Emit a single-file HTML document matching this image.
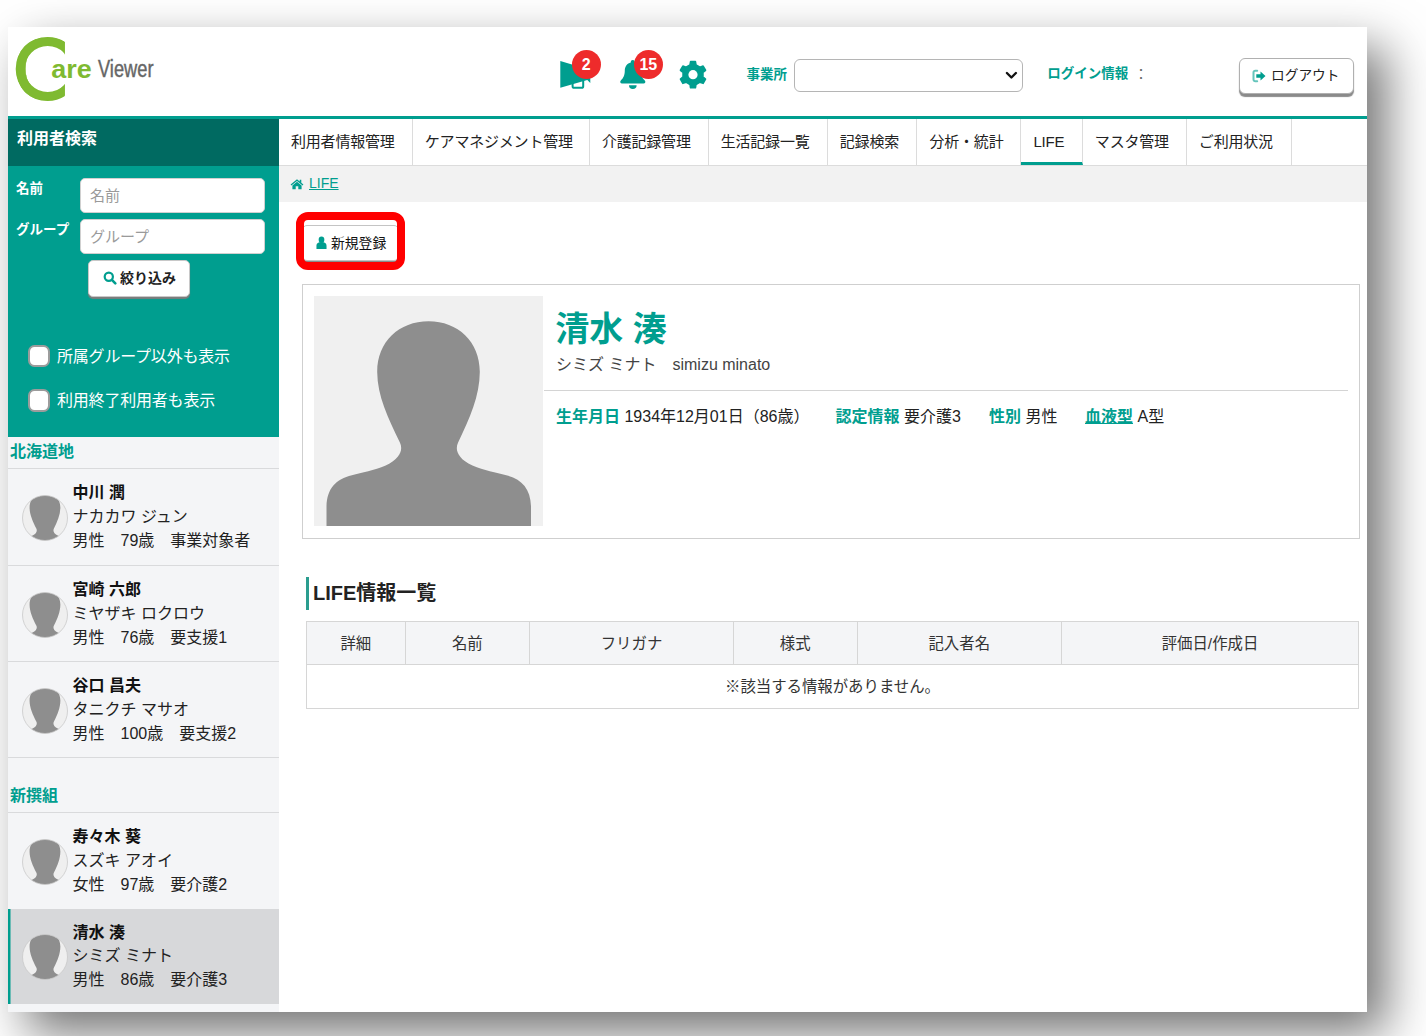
<!DOCTYPE html>
<html lang="ja">
<head>
<meta charset="utf-8">
<title>Care Viewer - LIFE</title>
<style>
*{box-sizing:border-box;margin:0;padding:0}
html,body{width:1426px;height:1036px;overflow:hidden;background:#fff}
body{font-family:"Liberation Sans","Noto Sans CJK JP",sans-serif;color:#222;position:relative}
#frame{position:absolute;left:8px;top:27px;width:1359px;height:985px;background:#fff;box-shadow:19px 21px 46px rgba(0,0,0,.55);overflow:hidden}
.abs{position:absolute}
/* header */
#hdr{position:absolute;left:0;top:0;width:1359px;height:89px;background:#fff}
#hline{position:absolute;left:0;top:89px;width:1359px;height:3px;background:#009e8f}
.teal{color:#009e8f}
.hlabel{position:absolute;font-weight:bold;font-size:13.5px;color:#009e8f;white-space:nowrap;line-height:20px}
#sel{position:absolute;left:786px;top:32px;width:229px;height:33px;border:1px solid #b5b5b5;border-radius:6px;background:#fff}
#logout{position:absolute;left:1231px;top:31px;width:115px;height:35.5px;border:1px solid #b0b0b0;border-radius:6px;background:#fff;box-shadow:0 3px 1px #8a8a8a;font-size:13.7px;line-height:33px;white-space:nowrap}
.badge{position:absolute;width:29px;height:29px;border-radius:50%;background:#ee2b2b;color:#fff;font-weight:bold;font-size:16px;line-height:29.8px;text-align:center}
/* sidebar */
#side{position:absolute;left:0;top:92px;width:271px;height:893px;background:#f4f5f7}
#sidehd{position:absolute;left:0;top:0;width:271px;height:47px;background:#006a61;color:#fff;font-weight:bold;font-size:16px;line-height:40px;padding-left:9px}
#search{position:absolute;left:0;top:47px;width:271px;height:271px;background:#009e8f;color:#fff}
.slabel{position:absolute;left:8px;font-weight:bold;font-size:13.5px;line-height:20px;white-space:nowrap}
.sinput{position:absolute;left:72px;width:185px;height:35px;background:#fff;border-radius:5px;border:1px solid #d0d0d0;color:#9a9a9a;font-size:15px;line-height:33px;padding-left:9px}
#filter{position:absolute;left:80px;width:102px;height:37px;background:#fff;border-radius:5px;border:1px solid #c8c8c8;box-shadow:0 2px 1px #7d7d7d;color:#222;font-weight:bold;font-size:14px;line-height:34px;white-space:nowrap}
.cb{position:absolute;left:19.5px;width:22.5px;height:22.5px;background:#fff;border:2px solid #9c9c9c;border-radius:6.5px}
.cbl{position:absolute;left:49px;letter-spacing:-.2px;font-size:16px;line-height:24px;white-space:nowrap;color:#fff}
.ghead{position:absolute;left:0;width:271px;border-bottom:1px solid #d9dadc;color:#009e8f;font-weight:bold;font-size:16px;padding-left:2px;white-space:nowrap}
.item{position:absolute;left:0;width:271px;height:97px;border-bottom:1px solid #d9dadc}
.item.sel{background:linear-gradient(90deg,#009e8f 2px,#d7d8da 3px);border-bottom:none}
.item .av{position:absolute;left:14px;top:25.5px;width:46px;height:46px}
.item .t{position:absolute;left:64.5px;top:11.4px;font-size:16px;line-height:24.3px;white-space:nowrap;color:#222}
.item .t b{font-size:16px;color:#111;position:relative;top:.8px}
/* nav */
#nav{position:absolute;left:271px;top:92px;width:1088px;height:47px;background:#fff;border-bottom:1px solid #dcdcdc;display:flex}
#nav div{height:46px;padding:0 0 0 12px;text-align:left;letter-spacing:-.2px;flex:none;border-right:1px solid #dcdcdc;font-size:15px;line-height:46px;white-space:nowrap;color:#222}
#nav div.on{border-bottom:3px solid #009e8f;height:46px}
#crumb{position:absolute;left:271px;top:139px;width:1088px;height:36px;background:#f2f2f2}
/* content */
#hl{position:absolute;left:288px;top:185px;width:109px;height:58px;border:8px solid #ff0000;border-radius:12px}
#newbtn{position:absolute;left:294px;top:198px;width:97px;height:35.5px;border:1px solid #c4c4c4;border-radius:5px;background:#fff;box-shadow:0 2px 1px #8a8a8a;font-size:13.8px;line-height:34px;white-space:nowrap;color:#111}
#card{position:absolute;left:294px;top:257px;width:1058px;height:255px;border:1px solid #cfcfcf;background:#fff}
#photo{position:absolute;left:11px;top:11px;width:229px;height:230px;background:#f0f0f0}
#uname{position:absolute;left:252.3px;top:24px;font-size:34px;font-weight:bold;color:#009e8f;line-height:40px;white-space:nowrap}
#ukana{position:absolute;left:253px;top:68.5px;font-size:16px;color:#444;line-height:22px;white-space:pre}
#udiv{position:absolute;left:241px;top:105px;width:804px;height:1px;background:#d4d4d4}
#uinfo{position:absolute;left:253px;top:121px;font-size:16px;line-height:22px;white-space:nowrap;color:#222}
#uinfo b{color:#009e8f}
#uinfo span{position:absolute;top:0}
#sect{position:absolute;left:298px;top:550px;height:33px;border-left:3px solid #2a9d8f;padding-left:4px;font-size:20px;font-weight:bold;line-height:33px;color:#222;white-space:nowrap}
#tbl{position:absolute;left:298px;top:594px;width:1053px;height:87.6px;border:1px solid #d6d6d6}
#tbl .th{position:absolute;top:0;height:43px;background:#f4f5f7;border-right:1px solid #d6d6d6;border-bottom:1px solid #d6d6d6;font-size:15.4px;line-height:43.6px;text-align:center;color:#333}
#tbl .td{position:absolute;left:0;top:43px;width:1051px;height:42px;font-size:15.4px;line-height:43.4px;text-align:center;color:#333}
</style>
</head>
<body>
<svg width="0" height="0" style="position:absolute"><defs>
<clipPath id="avc"><circle cx="23" cy="23" r="22.500"/></clipPath>
</defs></svg>
<div id="frame">
<div id="hdr">
<svg class="abs" style="left:0;top:0" width="200" height="89" viewBox="0 0 200 89">
<defs><clipPath id="cclip"><rect x="0" y="0" width="56.8" height="89"/></clipPath></defs>
<circle cx="39.7" cy="42" r="27.5" fill="none" stroke="#7fba31" stroke-width="9" clip-path="url(#cclip)"/>
<g clip-path="url(#cclip)"><text transform="translate(8.6,0) scale(1.04,1)" x="-4.22" y="71.95" font-family="'Liberation Sans',sans-serif" font-size="87" fill="#7fba31" stroke="#7fba31" stroke-width="0.4">C</text></g><text x="43.3" y="50.8" font-family="'Liberation Sans',sans-serif" font-weight="bold" font-size="26.6" fill="#7fba31" textLength="40.5" lengthAdjust="spacingAndGlyphs">are</text>
<text x="90" y="50.2" font-family="'Liberation Sans',sans-serif" font-size="24.6" fill="#666" stroke="#666" stroke-width=".45" textLength="55.5" lengthAdjust="spacingAndGlyphs">Viewer</text>
</svg>
<svg class="abs" style="left:540px;top:20px" width="180" height="60" viewBox="540 20 180 60">
<rect x="564.6" y="51" width="10.6" height="9.8" rx="1.6" fill="#fff" stroke="#009e8f" stroke-width="2"/>
<path d="M552.3 34 L582.3 43 L582.3 56 L579.3 52.9 L552.3 60.7Z" fill="#009e8f"/>
<path d="M624.8 33c1.2 0 2 .9 2 2v.6c3.6.9 6 4 6 8 0 5 1.500 7.600 4 10 1.200 1.200.4 3-1.200 3h-21.600c-1.600 0-2.400-1.800-1.200-3 2.500-2.400 4-5 4-10 0-4 2.400-7.100 6-8v-.6c0-1.100.8-2 2-2z" fill="#009e8f"/>
<path d="M621 58.200h7.600a3.800 3.800 0 0 1-7.600 0z" fill="#009e8f"/>
<g transform="translate(685,47.700)"><path d="M-2.98 -9.75 L-2.42 -13.08 L2.42 -13.08 L2.98 -9.75 L6.96 -7.46 L10.11 -8.64 L12.54 -4.44 L9.94 -2.29 L9.94 2.29 L12.54 4.44 L10.11 8.64 L6.96 7.46 L2.98 9.75 L2.42 13.08 L-2.42 13.08 L-2.98 9.75 L-6.96 7.46 L-10.11 8.64 L-12.54 4.44 L-9.94 2.29 L-9.94 -2.29 L-12.54 -4.44 L-10.11 -8.64 L-6.96 -7.46Z" fill="#009e8f" stroke="#009e8f" stroke-width="1.6" stroke-linejoin="round"/><circle r="4.600" fill="#fff"/></g>
</svg>
<div class="badge" style="left:563.8px;top:22.8px">2</div>
<div class="badge" style="left:625.8px;top:22.8px">15</div>
<div class="hlabel" style="left:738.4px;top:37.8px">事業所</div>
<div id="sel"><svg class="abs" style="left:208px;top:9px" width="16" height="14" viewBox="0 0 16 14"><path d="M3.9 4 L8.4 8.5 L12.9 4" fill="none" stroke="#111" stroke-width="2.4" stroke-linecap="round" stroke-linejoin="round"/></svg></div>
<div class="hlabel" style="left:1039.2px;top:37px">ログイン情報</div>
<div class="abs" style="left:1126px;top:37px;font-size:14px;line-height:20px;color:#666">：</div>
<div id="logout"><svg class="abs" style="left:12.2px;top:10px" width="14" height="14" viewBox="0 0 14 14"><path d="M5.200 1.800 H3.200 a1.700 1.700 0 0 0 -1.700 1.700 v7 a1.700 1.700 0 0 0 1.700 1.700 H5.200" fill="none" stroke="#009e8f" stroke-opacity=".6" stroke-width="2" stroke-linecap="round"/><path d="M4.300 5.300 h4.200 v-2.800 l5 4.500 l-5 4.500 v-2.800 h-4.200z" fill="#009e8f"/></svg><span class="abs" style="left:31px;top:0">ログアウト</span></div>
</div>
<div id="hline"></div>
<div id="side">
<div id="sidehd">利用者検索</div>
<div id="search">
<div class="slabel" style="top:12.700px">名前</div>
<div class="sinput" style="top:12px">名前</div>
<div class="slabel" style="top:53.600px">グループ</div>
<div class="sinput" style="top:53px">グループ</div>
<div id="filter" style="top:94px"><svg class="abs" style="left:14px;top:10px" width="14" height="14" viewBox="0 0 14 14"><circle cx="5.800" cy="5.800" r="4.100" fill="none" stroke="#009e8f" stroke-width="2.200"/><path d="M8.900 8.900 L12.300 12.300" stroke="#009e8f" stroke-width="2.600" stroke-linecap="round"/></svg><span class="abs" style="left:31px;top:0">絞り込み</span></div>
<div class="cb" style="top:178.5px"></div><div class="cbl" style="top:178.6px">所属グループ以外も表示</div>
<div class="cb" style="top:223.4px"></div><div class="cbl" style="top:223.4px">利用終了利用者も表示</div>
</div>
<div class="ghead" style="top:318px;height:32px;line-height:30.6px">北海道地</div>
<div class="item" style="top:350px;height:97px"><svg class="av" viewBox="0 0 46 46"><circle cx="23" cy="23" r="22.500" fill="#efefef"/><g clip-path="url(#avc)"><g transform="translate(23,36) scale(0.3) translate(-114.600,-153.700)"><path d="M114.6 25.3C85 25.3 63 46 63.2 76C63.4 100 74 122 86 146.5C89 153 87 162 71.7 169.4C60 174.5 48 176.5 37.900 179C22 183 13 192 12.500 210L12.500 229.700L217 229.700L217 210C216.500 192 207.500 183 192.300 179C182 176.500 170 174.500 158.500 169.400C143 162 141 153 144 146.500C156 122 165.600 100 165.800 76C166 46 144 25.300 114.600 25.300Z" fill="#8e8e8e"/></g></g><circle cx="23" cy="23" r="22.500" fill="none" stroke="#c9c9c9" stroke-width="0.800"/></svg><div class="t"><b>中川 潤</b><br>ナカカワ ジュン<br>男性　79歳　事業対象者</div></div>
<div class="item" style="top:447px;height:96px"><svg class="av" viewBox="0 0 46 46"><circle cx="23" cy="23" r="22.500" fill="#efefef"/><g clip-path="url(#avc)"><g transform="translate(23,36) scale(0.3) translate(-114.600,-153.700)"><path d="M114.6 25.3C85 25.3 63 46 63.2 76C63.4 100 74 122 86 146.5C89 153 87 162 71.7 169.4C60 174.5 48 176.5 37.900 179C22 183 13 192 12.500 210L12.500 229.700L217 229.700L217 210C216.500 192 207.500 183 192.300 179C182 176.500 170 174.500 158.500 169.400C143 162 141 153 144 146.500C156 122 165.600 100 165.800 76C166 46 144 25.300 114.600 25.300Z" fill="#8e8e8e"/></g></g><circle cx="23" cy="23" r="22.500" fill="none" stroke="#c9c9c9" stroke-width="0.800"/></svg><div class="t"><b>宮崎 六郎</b><br>ミヤザキ ロクロウ<br>男性　76歳　要支援1</div></div>
<div class="item" style="top:543px;height:96px"><svg class="av" viewBox="0 0 46 46"><circle cx="23" cy="23" r="22.500" fill="#efefef"/><g clip-path="url(#avc)"><g transform="translate(23,36) scale(0.3) translate(-114.600,-153.700)"><path d="M114.6 25.3C85 25.3 63 46 63.2 76C63.4 100 74 122 86 146.5C89 153 87 162 71.7 169.4C60 174.5 48 176.5 37.900 179C22 183 13 192 12.500 210L12.500 229.700L217 229.700L217 210C216.500 192 207.500 183 192.300 179C182 176.500 170 174.500 158.500 169.400C143 162 141 153 144 146.500C156 122 165.600 100 165.800 76C166 46 144 25.300 114.600 25.300Z" fill="#8e8e8e"/></g></g><circle cx="23" cy="23" r="22.500" fill="none" stroke="#c9c9c9" stroke-width="0.800"/></svg><div class="t"><b>谷口 昌夫</b><br>タニクチ マサオ<br>男性　100歳　要支援2</div></div>
<div class="ghead" style="top:639px;height:55px;line-height:76.6px">新撰組</div>
<div class="item" style="top:694px;height:95.5px;border-bottom:none"><svg class="av" viewBox="0 0 46 46"><circle cx="23" cy="23" r="22.500" fill="#efefef"/><g clip-path="url(#avc)"><g transform="translate(23,36) scale(0.3) translate(-114.600,-153.700)"><path d="M114.6 25.3C85 25.3 63 46 63.2 76C63.4 100 74 122 86 146.5C89 153 87 162 71.7 169.4C60 174.5 48 176.5 37.900 179C22 183 13 192 12.500 210L12.500 229.700L217 229.700L217 210C216.500 192 207.500 183 192.300 179C182 176.500 170 174.500 158.500 169.400C143 162 141 153 144 146.500C156 122 165.600 100 165.800 76C166 46 144 25.300 114.600 25.300Z" fill="#8e8e8e"/></g></g><circle cx="23" cy="23" r="22.500" fill="none" stroke="#c9c9c9" stroke-width="0.800"/></svg><div class="t"><b>寿々木 葵</b><br>スズキ アオイ<br>女性　97歳　要介護2</div></div>
<div class="item sel" style="top:789.5px;height:95.7px"><svg class="av" viewBox="0 0 46 46"><circle cx="23" cy="23" r="22.500" fill="#efefef"/><g clip-path="url(#avc)"><g transform="translate(23,36) scale(0.3) translate(-114.600,-153.700)"><path d="M114.6 25.3C85 25.3 63 46 63.2 76C63.4 100 74 122 86 146.5C89 153 87 162 71.7 169.4C60 174.5 48 176.5 37.900 179C22 183 13 192 12.500 210L12.500 229.700L217 229.700L217 210C216.500 192 207.500 183 192.300 179C182 176.500 170 174.500 158.500 169.400C143 162 141 153 144 146.500C156 122 165.600 100 165.800 76C166 46 144 25.300 114.600 25.300Z" fill="#8e8e8e"/></g></g><circle cx="23" cy="23" r="22.500" fill="none" stroke="#c9c9c9" stroke-width="0.800"/></svg><div class="t"><b>清水 湊</b><br>シミズ ミナト<br>男性　86歳　要介護3</div></div>
</div>
<div id="nav"><div style="width:133.8px">利用者情報管理</div><div style="width:177.1px">ケアマネジメント管理</div><div style="width:118.8px">介護記録管理</div><div style="width:119.1px">生活記録一覧</div><div style="width:89.7px">記録検索</div><div style="width:104px">分析・統計</div><div class="on" style="width:61.4px">LIFE</div><div style="width:104px">マスタ管理</div><div style="width:104.9px">ご利用状況</div></div>
<div id="newbtn"><svg class="abs" style="left:13px;top:9.8px" width="11" height="13.3" viewBox="0 0 12 13" preserveAspectRatio="none"><circle cx="6" cy="3.600" r="3.100" fill="#009e8f"/><path d="M0.500 12.600 V9.600 C0.500 7 2.400 5.900 6 5.900 S11.500 7 11.500 9.600 V12.600Z" fill="#009e8f"/></svg><span class="abs" style="left:28px;top:.5px">新規登録</span></div>
<div id="hl"></div>
<div id="card">
<div id="photo"><svg width="229" height="230" viewBox="0 0 229 229.700" preserveAspectRatio="none" style="display:block"><path d="M114.6 25.3C85 25.3 63 46 63.2 76C63.4 100 74 122 86 146.5C89 153 87 162 71.7 169.4C60 174.5 48 176.5 37.900 179C22 183 13 192 12.500 210L12.500 229.700L217 229.700L217 210C216.500 192 207.500 183 192.300 179C182 176.500 170 174.500 158.500 169.400C143 162 141 153 144 146.500C156 122 165.600 100 165.800 76C166 46 144 25.300 114.600 25.300Z" fill="#8e8e8e"/></svg></div>
<div id="uname">清水 湊</div>
<div id="ukana">シミズ ミナト　simizu minato</div>
<div id="udiv"></div>
<div id="uinfo"><span style="left:0"><b>生年月日</b> 1934年12月01日（86歳）</span><span style="left:279.5px"><b>認定情報</b> 要介護3</span><span style="left:433px"><b>性別</b> 男性</span><span style="left:529px"><b style="text-decoration:underline">血液型</b> A型</span></div>
</div>
<div id="sect">LIFE情報一覧</div>
<div id="tbl">
<div class="th" style="left:0;width:98.700px">詳細</div>
<div class="th" style="left:98.700px;width:124.300px">名前</div>
<div class="th" style="left:223px;width:204px">フリガナ</div>
<div class="th" style="left:427px;width:123.500px">様式</div>
<div class="th" style="left:550.500px;width:204.500px">記入者名</div>
<div class="th" style="left:755px;width:296px;border-right:none">評価日/作成日</div>
<div class="td">※該当する情報がありません。</div>
</div>
<div id="crumb"><svg class="abs" style="left:11px;top:11.500px" width="14" height="12" viewBox="0 0 14 12"><path d="M7 1.200 L0.600 6.600 L1.400 7.500 L7 2.900 L12.600 7.500 L13.400 6.600 L11.300 4.800 V1.800 H9.700 V3.500Z" fill="#009e8f"/><path d="M7 3.800 L2.400 7.600 V11.200 H5.700 V8.300 H8.300 V11.200 H11.600 V7.600Z" fill="#009e8f"/></svg><span class="abs" style="left:30px;top:8.3px;font-size:14px;line-height:18px;color:#009e8f;text-decoration:underline">LIFE</span></div>
</div>
</body>
</html>
